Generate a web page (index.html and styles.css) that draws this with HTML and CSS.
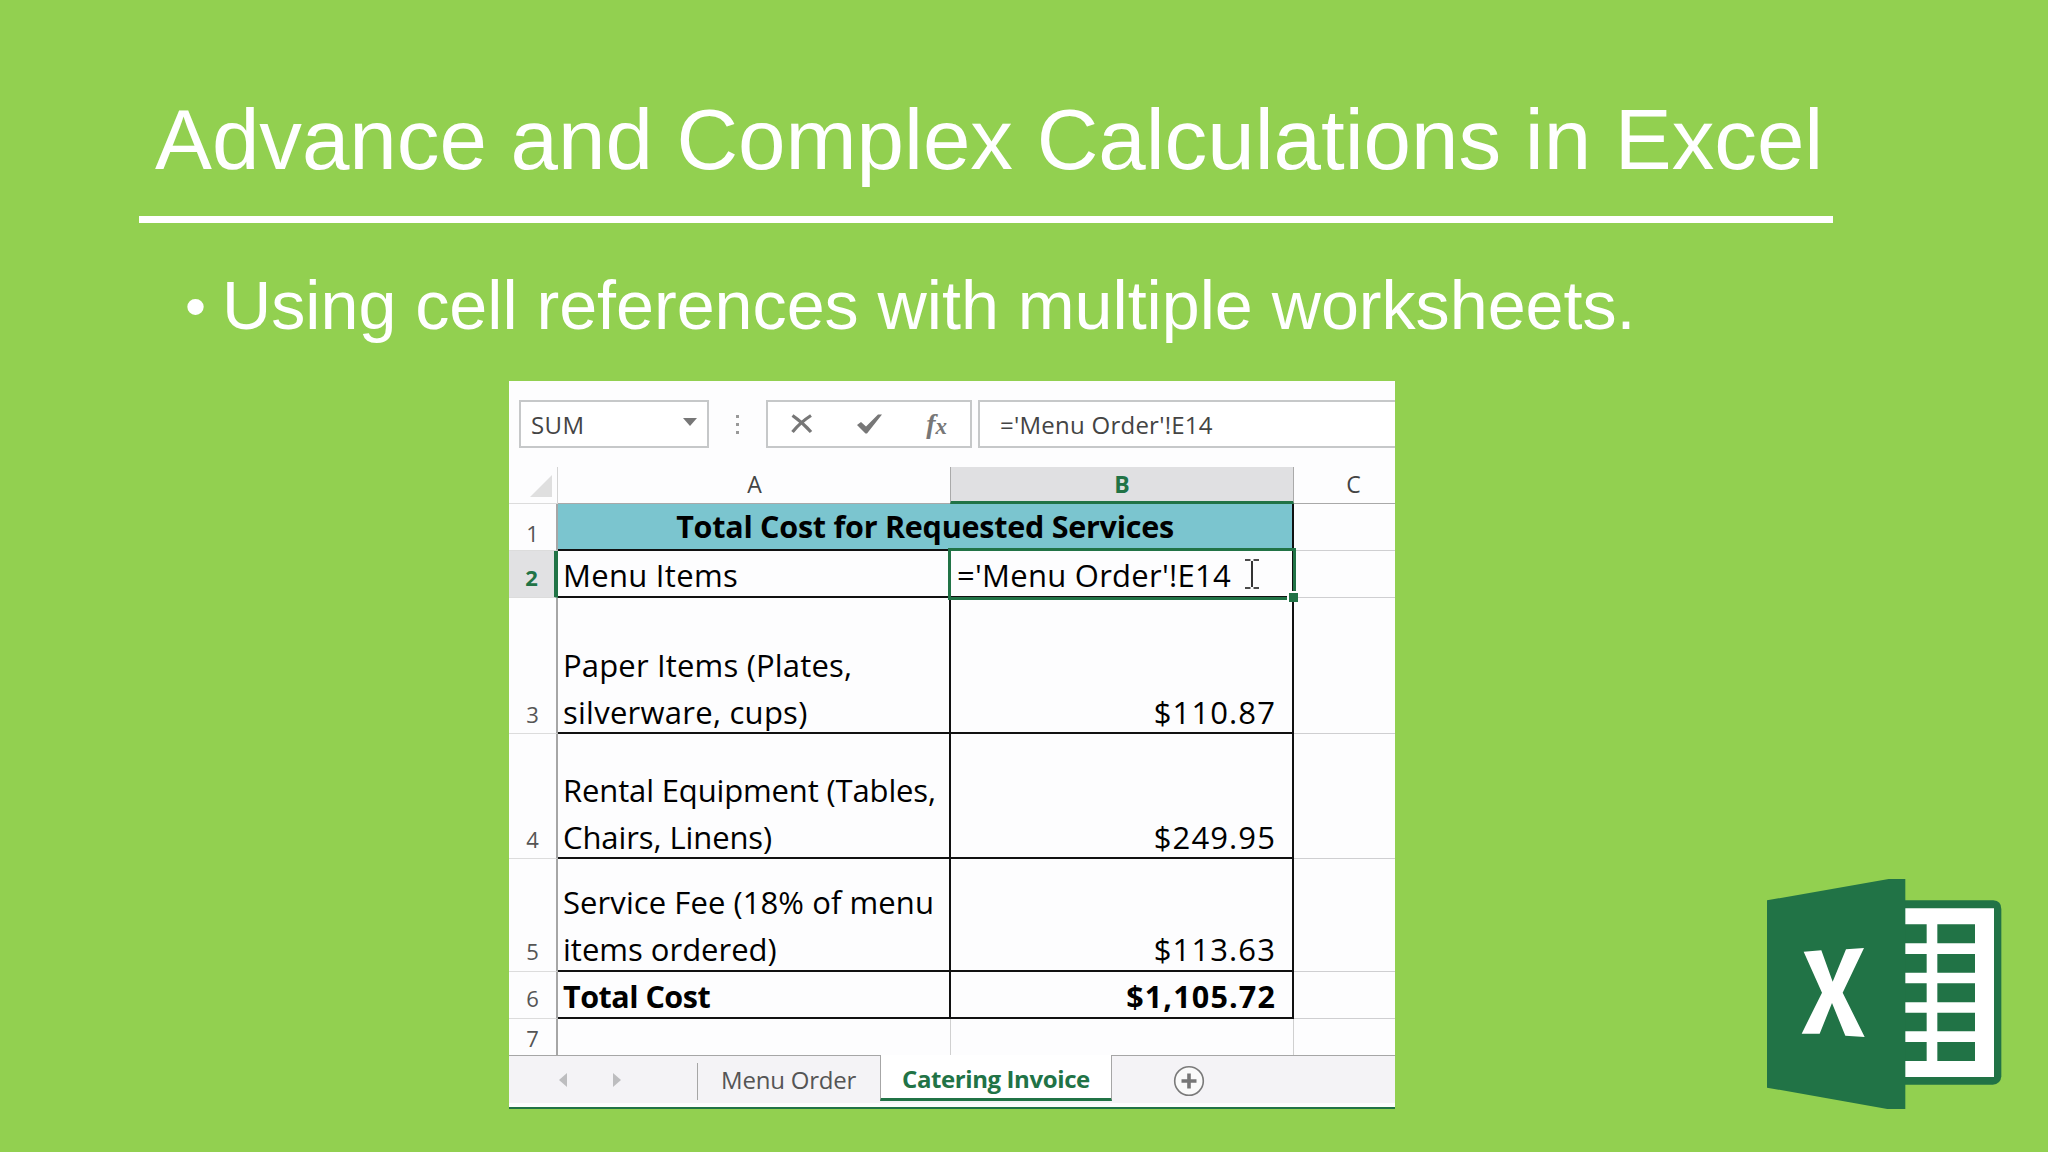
FILE: index.html
```html
<!DOCTYPE html>
<html lang="en">
<head>
<meta charset="utf-8">
<title>Advance and Complex Calculations in Excel</title>
<link rel="stylesheet" href="styles.css">
</head>
<body>
<main class="slide">
  <h1 class="title">Advance and Complex Calculations in Excel</h1>
  <div class="rule"></div>
  <ul class="points">
    <li class="point"><span class="bullet">•</span><span>Using cell references with multiple worksheets.</span></li>
  </ul>

  <section class="excel">
    <div class="formula-bar">
      <div class="name-box">
        <span class="ls-sum">SUM</span>
        <svg class="caret" viewBox="0 0 14 8"><path d="M0 0h14L7 8z" fill="#777"/></svg>
      </div>
      <div class="dots"><i></i><i></i><i></i></div>
      <div class="actions">
        <svg width="22" height="20" viewBox="0 0 22 20"><path d="M1.5 1.5C8 6 14 11 20 18M20 1.5C13 6 7 11 1.5 18" fill="none" stroke="#777" stroke-width="3.2"/></svg>
        <svg width="26" height="20" viewBox="0 0 26 20"><path d="M0 11l4-3 5 4.500L21 .5h4L10 19.500H8.500z" fill="#777"/></svg>
        <span class="fx">f<sub>x</sub></span>
      </div>
      <div class="formula ls-formula-small">='Menu Order'!E14</div>
    </div>

    <div class="grid">
      <div class="row row-head">
        <div class="gutter corner"><svg width="22" height="22" viewBox="0 0 22 22"><path d="M22 0v22H0z" fill="#dfdfdf"/></svg></div>
        <div class="col-head">A</div>
        <div class="col-head col-active">B</div>
        <div class="col-head col-c">C</div>
      </div>
      <div class="row row-1">
        <div class="gutter">1</div>
        <div class="cell banner"><span>Total Cost for Requested Services</span></div>
        <div class="cell-c"></div>
      </div>
      <div class="row row-2">
        <div class="gutter gutter-active">2</div>
        <div class="cell cell-a"><span class="ls-menu">Menu Items</span></div>
        <div class="cell cell-b editing">
          <span class="ls-formula">='Menu Order'!E14</span>
          <svg class="ibeam" width="14" height="30" viewBox="0 0 14 30"><path d="M0 1h5.500M8.500 1H14M0 29h5.500M8.500 29H14M7 2v26" fill="none" stroke="#111" stroke-width="1.700"/></svg>
          <i class="selection"></i><i class="handle"></i>
        </div>
        <div class="cell-c"></div>
      </div>
      <div class="row row-3">
        <div class="gutter">3</div>
        <div class="cell cell-a"><span class="ls-paper">Paper Items (Plates,</span><span class="ls-silver">silverware, cups)</span></div>
        <div class="cell cell-b"><span class="ls-num">$110.87</span></div>
        <div class="cell-c"></div>
      </div>
      <div class="row row-4">
        <div class="gutter">4</div>
        <div class="cell cell-a"><span class="ls-rental">Rental Equipment (Tables,</span><span class="ls-chairs">Chairs, Linens)</span></div>
        <div class="cell cell-b"><span class="ls-num">$249.95</span></div>
        <div class="cell-c"></div>
      </div>
      <div class="row row-5">
        <div class="gutter">5</div>
        <div class="cell cell-a"><span class="ls-service">Service Fee (18% of menu</span><span>items ordered)</span></div>
        <div class="cell cell-b"><span class="ls-num">$113.63</span></div>
        <div class="cell-c"></div>
      </div>
      <div class="row row-6">
        <div class="gutter">6</div>
        <div class="cell cell-a strong"><span class="ls-total">Total Cost</span></div>
        <div class="cell cell-b strong"><span class="ls-sumtotal">$1,105.72</span></div>
        <div class="cell-c"></div>
      </div>
      <div class="row row-7">
        <div class="gutter">7</div>
        <div class="cell cell-a"></div>
        <div class="cell cell-b"></div>
        <div class="cell-c"></div>
      </div>
    </div>

    <div class="tabs">
      <div class="tab-nav">
        <svg width="8" height="14" viewBox="0 0 8 14"><path d="M8 0v14L0 7z" fill="#bdbdbf"/></svg>
        <svg width="8" height="14" viewBox="0 0 8 14"><path d="M0 0v14l8-7z" fill="#bdbdbf"/></svg>
      </div>
      <div class="tab">Menu Order</div>
      <div class="tab tab-active">Catering Invoice</div>
      <div class="tab-rest">
        <svg width="32" height="32" viewBox="0 0 32 32"><circle cx="16" cy="16" r="14.300" fill="#fafafa" stroke="#7a7a7a" stroke-width="1.600"/><path d="M16 8.500v15M8.500 16h15" stroke="#777" stroke-width="3.600"/></svg>
      </div>
    </div>
  </section>

  <svg class="logo" viewBox="51 56 705 690">
    <path d="M460 120h270q24 2 24 26v502q-2 24-26 25H460z" fill="#217346"/>
    <path d="M460 144h272v506H460z" fill="#fff"/>
    <path d="M460 192h70v57h-70zM460 281h70v56h-70zM460 369h70v57h-70zM460 457h70v56h-70zM460 545h70v57h-70zM562 192h113v57H562zM562 281h113v56H562zM562 369h113v57H562zM562 457h113v56H562zM562 545h113v57H562z" fill="#217346"/>
    <path d="M51 120L416 56h50v690h-54L51 682z" fill="#217346"/>
    <path d="M161 274l53-4 34 94 40-97 54-4-64 134 66 133-58-4-40-98-37 92h-54l61-123z" fill="#fff"/>
  </svg>
</main>
</body>
</html>
```
FILE: styles.css
```css
* { box-sizing: border-box; }
body { margin: 0; }

.slide {
  position: relative;
  width: 2048px;
  height: 1152px;
  padding-top: 92px;
  overflow: hidden;
  background: #92d050;
  color: #fff;
  font-family: "Liberation Sans", Arial, sans-serif;
}
.title {
  margin: 0 0 28px 155px;
  font-size: 85.33px;
  line-height: 96px;
  font-weight: 400;
  letter-spacing: -0.03px;
  white-space: nowrap;
}
.rule { width: 1694px; height: 7px; margin-left: 139px; background: #fff; }
.points { margin: 44px 0 38px 185px; padding: 0; list-style: none; }
.point {
  display: flex;
  align-items: baseline;
  height: 76px;
  font-size: 68.27px;
  line-height: 76px;
  letter-spacing: -0.03px;
  white-space: nowrap;
}
.bullet { width: 37px; font-size: 60px; line-height: 60px; transform: translateY(-2px); }

/* Worksheet window */
.excel {
  display: flex;
  flex-direction: column;
  width: 886px;
  height: 728px;
  margin-left: 509px;
  overflow: hidden;
  background: #fdfdfe;
  border-bottom: 2px solid #217346;
  color: #000;
  font-family: "Open Sans", Calibri, sans-serif;
}
.formula-bar {
  display: flex;
  height: 86px;
  padding: 19px 0 19px 10px;
  font-size: 24px;
  color: #444;
}
.name-box, .actions, .formula {
  display: flex;
  align-items: center;
  border: 2px solid #c6c8c9;
  background: #fff;
}
.name-box { width: 190px; justify-content: space-between; padding: 0 10px; }
.caret { width: 14px; height: 8px; margin-top: -5px; }
.dots { display: flex; flex-direction: column; justify-content: center; gap: 5px; width: 57px; padding-left: 27px; }
.dots i { width: 3px; height: 3px; background: #999; }
.actions { width: 206px; padding: 0 23px 0 23px; justify-content: space-between; }
.fx { font: italic 700 28px/28px "Liberation Serif", serif; color: #777; }
.fx sub { font-size: 23px; line-height: 0; vertical-align: -1px; }
.formula { flex: 1; margin-left: 6px; padding-left: 20px; border-right: 0; }

.row {
  display: grid;
  grid-template-columns: 49px 393px 343px 1fr;
  grid-template-rows: 100%;
}
.row-head { height: 37px; }
.row-1, .row-2, .row-6 { height: 47px; }
.row-3 { height: 136px; }
.row-4 { height: 125px; }
.row-5 { height: 113px; }
.row-7 { height: 36px; }

.gutter {
  display: flex;
  align-items: flex-end;
  justify-content: center;
  border-right: 2px solid #a6a6a6;
  border-bottom: 1px solid #dcdcdc;
  font-size: 22px;
  line-height: 37px;
  color: #555;
}
.row-1 .gutter { line-height: 33px; }
.row-5 .gutter, .row-6 .gutter { line-height: 39px; }
.corner { justify-content: flex-end; padding: 0 5px 6px 0; border-right: 1px solid #d4d4d4; }
.gutter.gutter-active {
  border-right: 4px solid #217346;
  background: #e1e1e3;
  color: #217346;
  font-weight: 700;
  line-height: 40px;
}
.row-7 .gutter { border-bottom: 0; line-height: 34px; }

.col-head {
  border-bottom: 1px solid #a9a9a9;
  font-size: 23px;
  line-height: 35px;
  text-align: center;
  color: #444;
}
.col-active {
  margin-left: -1px;
  border-left: 1px solid #aaa;
  border-right: 1px solid #aaa;
  border-bottom: 3px solid #217346;
  background: #e0e0e2;
  color: #217346;
  font-weight: 700;
}
.col-c { padding-right: 14px; padding-left: 32px; }

.cell {
  display: flex;
  flex-direction: column;
  justify-content: flex-end;
  border-right: 2px solid #111;
  border-bottom: 2px solid #111;
  font-size: 31px;
  line-height: 47px;
  white-space: nowrap;
}
.cell-a { padding-left: 5px; }
.cell-b { align-items: flex-end; padding-right: 16px; }
.cell-a span:last-of-type, .cell-b span { margin-bottom: -3px; }
.row-3 .cell span:last-child, .row-4 .cell span:last-child { margin-bottom: -4px; }
.banner {
  grid-column: 2 / 4;
  align-items: center;
  background: #7bc5cf;
  font-size: 30.5px;
  font-weight: 700;
  letter-spacing: -0.25px;
}
.banner span { margin-bottom: -1px; }
.strong { font-size: 30.5px; font-weight: 700; }
.cell-c { border-bottom: 1px solid #cfcfd1; }
.row-7 .cell { border-right: 1px solid #d0d0d0; border-bottom: 0; }
.row-7 .cell-c { border-bottom: 0; }

.editing { position: relative; align-items: flex-start; padding: 0 0 0 6px; }
.ibeam { position: absolute; left: 294px; top: 8px; }
.selection {
  position: absolute;
  left: -3px;
  right: -4px;
  top: -3px;
  bottom: -4px;
  border: 3px solid #217346;
}
.handle {
  position: absolute;
  right: -6px;
  bottom: -6px;
  width: 11px;
  height: 11px;
  border-top: 2px solid #fff;
  border-left: 2px solid #fff;
  background: #217346;
}

.tabs {
  display: flex;
  height: 48px;
  background: #f4f3f6;
  color: #555;
  font-size: 24px;
  line-height: 48px;
}
.tab-nav {
  display: flex;
  align-items: center;
  gap: 46px;
  width: 189px;
  padding-left: 50px;
  border-top: 1px solid #a6a6a6;
  background: linear-gradient(#a6a6a6, #a6a6a6) right 7px / 1px 37px no-repeat;
}
.tab {
  width: 182px;
  padding-left: 23px;
  border-top: 1px solid #a6a6a6;
  letter-spacing: -0.2px;
  white-space: nowrap;
}
.tab-active {
  width: 232px;
  height: 46px;
  padding-left: 21px;
  border: solid #a6a6a6;
  border-width: 0 1px 0 1px;
  border-bottom: 3px solid #217346;
  background: #fff;
  color: #217346;
  font-weight: 700;
  letter-spacing: -0.4px;
}
.tab-rest { flex: 1; padding: 9px 0 0 61px; border-top: 1px solid #a6a6a6; line-height: 0; }

.ls-sum { letter-spacing: 0.4px; }
.ls-formula-small { letter-spacing: 0.25px; }
.ls-menu { letter-spacing: 0.3px; }
.ls-formula { letter-spacing: 0.27px; }
.ls-paper { letter-spacing: 0.17px; }
.ls-silver { letter-spacing: 0.26px; }
.ls-rental { letter-spacing: -0.14px; }
.ls-chairs { letter-spacing: -0.09px; }
.ls-service { letter-spacing: 0.08px; }
.ls-total { letter-spacing: -0.5px; }
.ls-num { letter-spacing: 1.1px; }
.ls-sumtotal { letter-spacing: 1.15px; }

.logo { position: absolute; left: 1767px; top: 879px; width: 235px; height: 230px; }
```
